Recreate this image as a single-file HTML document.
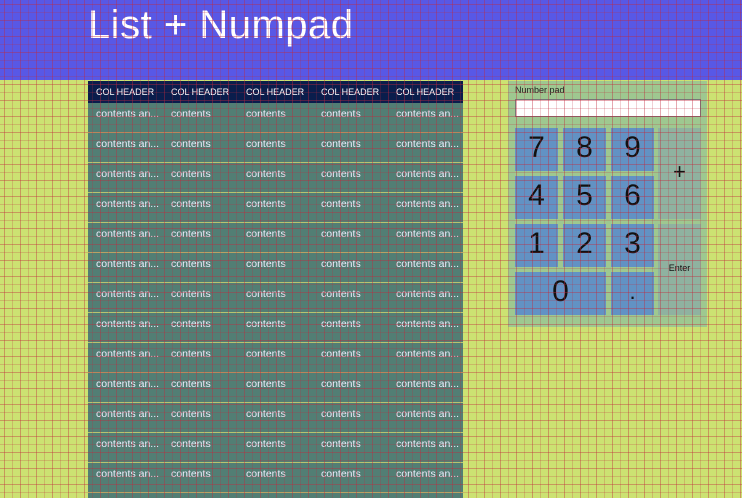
<!DOCTYPE html>
<html><head><style>
*{margin:0;padding:0;box-sizing:border-box}
html,body{width:742px;height:498px;overflow:hidden}
body{background:#cce272;font-family:"Segoe UI","Liberation Sans",sans-serif;position:relative}
.hdr{position:absolute;left:0;top:0;width:742px;height:80px;background:#5858e6}
.title{position:absolute;left:88px;top:3px;color:#fff;font-size:40px;font-weight:300;letter-spacing:0.5px}
.tbl{position:absolute;left:88px;top:81px;width:375px;height:417px;background:#527e74;overflow:hidden}
.th{height:22px;background:#0a1d4c;color:#fff;font-size:9px;display:flex}
.th div,.row div{width:75px;padding-left:8px;white-space:nowrap}
.th div{line-height:22px}
.row{height:30px;border-bottom:1px solid #b8c270;display:flex;color:#eef;font-size:10.5px}
.row div{line-height:22px}
.pad{position:absolute;left:508px;top:81px;width:199px;height:246px;background:#9ec890}
.lbl{position:absolute;left:7px;top:4px;font-size:9px;color:#222}
.inp{position:absolute;left:7px;top:18px;width:186px;height:18px;background:#fff;border:1px solid #777}
.k{position:absolute;background:#6292c4;color:#111;font-size:30px;font-weight:300;text-align:center}
.op{background:#8fb2a0;font-size:22px}
svg.grid{position:absolute;left:0;top:0;pointer-events:none}
</style></head><body>
<div class="hdr"><div class="title">List + Numpad</div></div>
<div class="tbl">
<div class="th"><div>COL HEADER</div><div>COL HEADER</div><div>COL HEADER</div><div>COL HEADER</div><div>COL HEADER</div></div>
<div class="row"><div>contents an...</div><div>contents</div><div>contents</div><div>contents</div><div>contents an...</div></div>
<div class="row"><div>contents an...</div><div>contents</div><div>contents</div><div>contents</div><div>contents an...</div></div>
<div class="row"><div>contents an...</div><div>contents</div><div>contents</div><div>contents</div><div>contents an...</div></div>
<div class="row"><div>contents an...</div><div>contents</div><div>contents</div><div>contents</div><div>contents an...</div></div>
<div class="row"><div>contents an...</div><div>contents</div><div>contents</div><div>contents</div><div>contents an...</div></div>
<div class="row"><div>contents an...</div><div>contents</div><div>contents</div><div>contents</div><div>contents an...</div></div>
<div class="row"><div>contents an...</div><div>contents</div><div>contents</div><div>contents</div><div>contents an...</div></div>
<div class="row"><div>contents an...</div><div>contents</div><div>contents</div><div>contents</div><div>contents an...</div></div>
<div class="row"><div>contents an...</div><div>contents</div><div>contents</div><div>contents</div><div>contents an...</div></div>
<div class="row"><div>contents an...</div><div>contents</div><div>contents</div><div>contents</div><div>contents an...</div></div>
<div class="row"><div>contents an...</div><div>contents</div><div>contents</div><div>contents</div><div>contents an...</div></div>
<div class="row"><div>contents an...</div><div>contents</div><div>contents</div><div>contents</div><div>contents an...</div></div>
<div class="row"><div>contents an...</div><div>contents</div><div>contents</div><div>contents</div><div>contents an...</div></div>
<div class="row"><div>contents an...</div><div>contents</div><div>contents</div><div>contents</div><div>contents an...</div></div>
</div>
<div class="pad">
<div class="lbl">Number pad</div><div class="inp"></div>
<div class="k" style="left:7px;top:47px;width:43px;height:43px;line-height:40px">7</div>
<div class="k" style="left:55px;top:47px;width:43px;height:43px;line-height:40px">8</div>
<div class="k" style="left:103px;top:47px;width:43px;height:43px;line-height:40px">9</div>
<div class="k" style="left:7px;top:95px;width:43px;height:43px;line-height:40px">4</div>
<div class="k" style="left:55px;top:95px;width:43px;height:43px;line-height:40px">5</div>
<div class="k" style="left:103px;top:95px;width:43px;height:43px;line-height:40px">6</div>
<div class="k" style="left:7px;top:143px;width:43px;height:43px;line-height:40px">1</div>
<div class="k" style="left:55px;top:143px;width:43px;height:43px;line-height:40px">2</div>
<div class="k" style="left:103px;top:143px;width:43px;height:43px;line-height:40px">3</div>
<div class="k" style="left:7px;top:191px;width:91px;height:43px;line-height:40px">0</div>
<div class="k" style="left:103px;top:191px;width:43px;height:43px;line-height:40px;font-size:22px">.</div>
<div class="k op" style="left:150px;top:47px;width:43px;height:91px;line-height:88px">+</div>
<div class="k op" style="left:150px;top:143px;width:43px;height:91px;line-height:88px;font-size:9px;font-weight:400">Enter</div>
</div>
<svg class="grid" width="742" height="498" xmlns="http://www.w3.org/2000/svg">
<defs><pattern id="g" width="16" height="16" patternUnits="userSpaceOnUse">
<rect x="4" y="0" width="1" height="16" fill="#c0283c" fill-opacity="0.4"/>
<rect x="12" y="0" width="1" height="16" fill="#c0283c" fill-opacity="0.22"/>
<rect x="0" y="4" width="16" height="1" fill="#c0283c" fill-opacity="0.4"/>
<rect x="0" y="12" width="16" height="1" fill="#c0283c" fill-opacity="0.22"/>
</pattern></defs>
<rect width="742" height="498" fill="url(#g)"/>
</svg>
</body></html>
